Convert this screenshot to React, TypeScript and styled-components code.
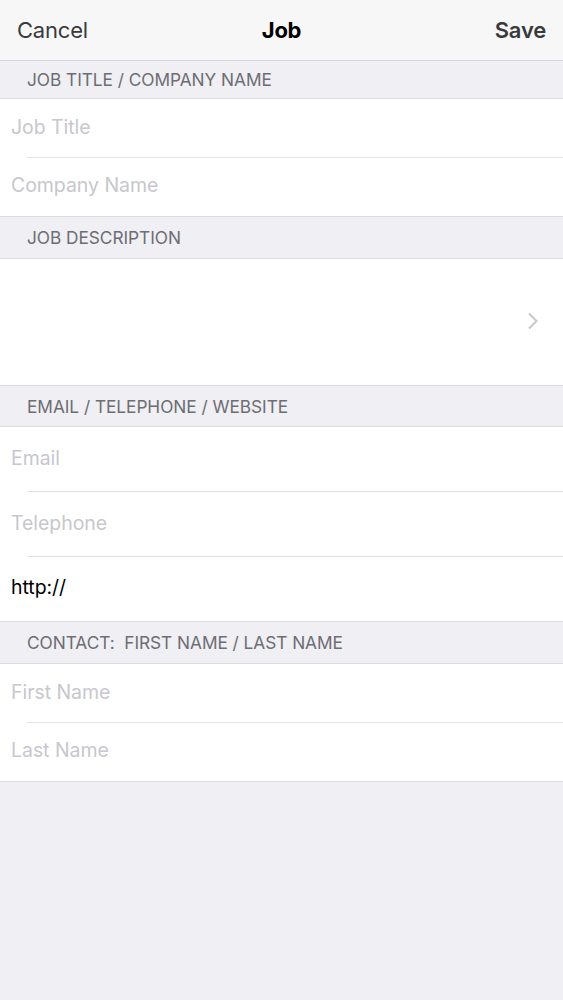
import React from "react";
import styled, { createGlobalStyle } from "styled-components";

const Global = createGlobalStyle`
  html, body { margin: 0; padding: 0; background: #efeff4; }
  body { font-family: Inter, "Noto Sans", "Liberation Sans", sans-serif; -webkit-font-smoothing: antialiased; }
  * { box-sizing: border-box; }
`;

const Page = styled.div`
  width: 563px;
  min-height: 1000px;
  background: #efeff4;
  display: flex;
  flex-direction: column;
`;

const NavBar = styled.div`
  height: 61px;
  background: #f7f7f8;
  border-bottom: 1px solid #d6d6da;
  display: grid;
  grid-template-columns: 1fr auto 1fr;
  align-items: center;
  padding: 0 17px 0 17px;
`;

const NavButton = styled.span<{ $align: "left" | "right"; $bold?: boolean }>`
  font-size: 22px;
  color: #3a3a3c;
  font-weight: ${(p) => (p.$bold ? 600 : 400)};
  justify-self: ${(p) => (p.$align === "left" ? "start" : "end")};
  letter-spacing: -0.2px;
`;

const NavTitle = styled.span`
  font-size: 22px;
  font-weight: 700;
  color: #000;
  letter-spacing: -0.3px;
`;

const SectionHeader = styled.div<{ $h: number }>`
  height: ${(p) => p.$h}px;
  display: flex;
  align-items: center;
  padding: 0 27px 0;
  font-size: 17.3px;
  color: #6d6d72;
  letter-spacing: -0.05px;
  text-transform: uppercase;
  white-space: pre;
`;

const Group = styled.div`
  background: #fff;
  border-top: 1px solid #dcdce0;
  border-bottom: 1px solid #dcdce0;
`;

const Row = styled.div<{ $h: number; $sep?: boolean }>`
  height: ${(p) => p.$h}px;
  display: flex;
  align-items: center;
  padding: 0 11px 4px;
  position: relative;
  font-size: 19.5px;
  letter-spacing: -0.05px;
  &::after {
    content: "";
    display: ${(p) => (p.$sep ? "block" : "none")};
    position: absolute;
    left: 27px;
    right: 0;
    bottom: 0;
    height: 1px;
    background: #e2e2e6;
  }
`;

const Placeholder = styled.span`
  color: #c7c7cd;
`;

const Value = styled.span`
  color: #000;
`;

const DescRow = styled.div`
  height: 126px;
  display: flex;
  align-items: center;
  justify-content: flex-end;
  padding: 0 24px 3px 0;
`;

const Chevron = () => (
  <svg width="12" height="18" viewBox="0 0 12 18">
    <path d="M2 1.5 L9.5 9 L2 16.5" fill="none" stroke="#c7c7cc" strokeWidth="2" />
  </svg>
);

export default function App() {
  return (
    <>
      <Global />
      <Page>
        <NavBar>
          <NavButton $align="left">Cancel</NavButton>
          <NavTitle>Job</NavTitle>
          <NavButton $align="right" $bold>Save</NavButton>
        </NavBar>
        <SectionHeader $h={37}>Job Title / Company Name</SectionHeader>
        <Group>
          <Row $h={59} $sep><Placeholder>Job Title</Placeholder></Row>
          <Row $h={58}><Placeholder>Company Name</Placeholder></Row>
        </Group>
        <SectionHeader $h={41}>Job Description</SectionHeader>
        <Group>
          <DescRow><Chevron /></DescRow>
        </Group>
        <SectionHeader $h={40}>Email / Telephone / Website</SectionHeader>
        <Group>
          <Row $h={65} $sep><Placeholder>Email</Placeholder></Row>
          <Row $h={65} $sep><Placeholder>Telephone</Placeholder></Row>
          <Row $h={64}><Value>http://</Value></Row>
        </Group>
        <SectionHeader $h={41}>Contact:  First Name / Last Name</SectionHeader>
        <Group>
          <Row $h={59} $sep><Placeholder>First Name</Placeholder></Row>
          <Row $h={58}><Placeholder>Last Name</Placeholder></Row>
        </Group>
      </Page>
    </>
  );
}
